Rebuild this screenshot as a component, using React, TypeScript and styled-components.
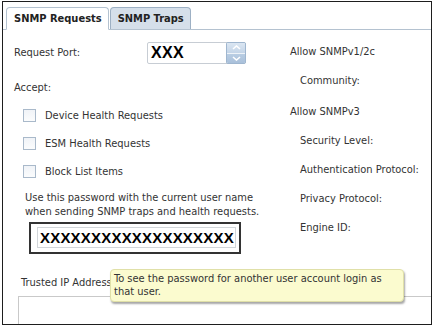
import React from "react";
import styled, { createGlobalStyle } from "styled-components";

const GlobalStyle = createGlobalStyle`
  html, body { margin: 0; padding: 0; background: #fff; }
  body {
    font-family: "DejaVu Sans Condensed", "DejaVu Sans", sans-serif;
    font-size: 11px;
    color: #333;
  }
`;

const Frame = styled.div`
  position: relative;
  margin: 1px 0 0 2px;
  width: 430px;
  height: 324px;
  box-sizing: border-box;
  border: 1px solid #1e1e1e;
  overflow: hidden;
  display: flex;
  flex-direction: column;
`;

const TabBar = styled.div`
  display: flex;
  align-items: flex-end;
  padding: 5px 0 0 3px;
  border-bottom: 1px solid #b4c2d0;
`;

const Tab = styled.div<{ $active?: boolean }>`
  box-sizing: border-box;
  height: ${(p) => (p.$active ? 23 : 22)}px;
  margin-bottom: ${(p) => (p.$active ? -1 : 0)}px;
  padding: 0 6px 0 7px;
  display: flex;
  align-items: center;
  font-weight: bold;
  font-size: 11px;
  color: #222;
  border: 1px solid ${(p) => (p.$active ? "#b4c2d0" : "#9db0c4")};
  border-bottom: ${(p) => (p.$active ? "1px solid #fff" : "none")};
  border-radius: 4px 4px 0 0;
  background: ${(p) => (p.$active ? "#fff" : "#d5dfea")};
  margin-left: ${(p) => (p.$active ? 0 : 1)}px;
`;

const Content = styled.div`
  display: grid;
  grid-template-columns: 273px 1fr;
  padding: 12px 0 0 11px;
`;

const LeftCol = styled.div`
  display: flex;
  flex-direction: column;
`;

const PortRow = styled.div`
  display: flex;
  align-items: center;
  height: 22px;
`;

const Label = styled.div<{ $width?: number }>`
  width: ${(p) => (p.$width ? `${p.$width}px` : "auto")};
  line-height: 16px;
  white-space: nowrap;
`;

const NumberBox = styled.div`
  display: flex;
  width: 99px;
  height: 22px;
  box-sizing: border-box;
  border: 1px solid #c7cdd4;
  border-radius: 2px;
`;

const NumberValue = styled.div`
  flex: 1;
  padding-left: 3px;
  display: flex;
  align-items: center;
  font-family: "Liberation Sans", Arial, sans-serif;
  font-weight: bold;
  font-size: 16px;
  color: #000;
  letter-spacing: 0.3px;
`;

const Spinner = styled.div`
  width: 18px;
  display: flex;
  flex-direction: column;
  border: 1px solid #9fb6cf;
  margin: -1px -1px -1px 0;
  border-radius: 2px;
  overflow: hidden;
`;

const SpinHalf = styled.div<{ $down?: boolean }>`
  flex: 1;
  display: flex;
  align-items: center;
  justify-content: center;
  background: ${(p) =>
    p.$down
      ? "linear-gradient(#b9cde3, #a9c0da)"
      : "linear-gradient(#dbe6f2, #c4d5e8)"};
  border-top: ${(p) => (p.$down ? "1px solid #eef3f8" : "none")};
`;

const SectionLabel = styled.div`
  margin-top: 16px;
  line-height: 16px;
`;

const CheckList = styled.div`
  margin-top: 5px;
  display: flex;
  flex-direction: column;
`;

const CheckRow = styled.label`
  display: flex;
  align-items: center;
  height: 28px;
  padding-left: 9px;
  gap: 9px;
`;

const Box = styled.span`
  width: 13px;
  height: 13px;
  box-sizing: border-box;
  border: 1px solid #a9b9ca;
  background: linear-gradient(#f0f3f7, #fbfcfd);
`;

const Note = styled.div`
  margin-top: 6px;
  padding-left: 11px;
  line-height: 14px;
  white-space: nowrap;
`;

const PasswordFrame = styled.div`
  margin: 3px 0 0 15px;
  width: 212px;
  height: 32px;
  box-sizing: border-box;
  border: 2px solid #333;
  padding: 3px 3px 4px 6px;
  display: flex;
`;

const PasswordInput = styled.div`
  flex: 1;
  border: 1px solid #d2d6da;
  display: flex;
  align-items: center;
  padding-left: 2px;
  font-family: "Liberation Sans", Arial, sans-serif;
  font-weight: bold;
  font-size: 15px;
  letter-spacing: 0.2px;
  color: #000;
  overflow: hidden;
  white-space: nowrap;
`;

const RightCol = styled.div`
  display: flex;
  flex-direction: column;
  gap: 9px;
  padding-left: 3px;
`;

const RightItem = styled.div<{ $indent?: boolean; $group?: boolean }>`
  line-height: 20px;
  padding-left: ${(p) => (p.$indent ? 10 : 0)}px;
  margin-top: ${(p) => (p.$group ? 2 : 0)}px;
  white-space: nowrap;
`;

const Bottom = styled.div`
  display: flex;
  flex-direction: column;
  margin-top: 21px;
  flex: 1;
`;

const TrustedLabel = styled.div`
  padding-left: 18px;
  line-height: 16px;
`;

const TrustedArea = styled.div`
  margin: 5px -4px 0 15px;
  flex: 1;
  min-height: 40px;
  border: 1px solid #c9c9c9;
`;

const Tooltip = styled.div`
  position: absolute;
  left: 107px;
  top: 267px;
  width: 294px;
  box-sizing: border-box;
  padding: 2px 8px 3px 3px;
  background: #fbfbcf;
  border: 1px solid #e0e0a8;
  border-radius: 4px;
  box-shadow: 1px 2px 2px rgba(0, 0, 0, 0.35);
  line-height: 13px;
  color: #333;
`;

const Chevron = ({ down }: { down?: boolean }) => (
  <svg width="9" height="5" viewBox="0 0 9 5">
    <path
      d={down ? "M1 1 L4.5 4 L8 1" : "M1 4 L4.5 1 L8 4"}
      fill="none"
      stroke="#fff"
      strokeWidth="1.6"
    />
  </svg>
);

const rightItems: { text: string; indent?: boolean; group?: boolean }[] = [
  { text: "Allow SNMPv1/2c" },
  { text: "Community:", indent: true },
  { text: "Allow SNMPv3", group: true },
  { text: "Security Level:", indent: true },
  { text: "Authentication Protocol:", indent: true },
  { text: "Privacy Protocol:", indent: true },
  { text: "Engine ID:", indent: true },
];

export default function App() {
  return (
    <>
      <GlobalStyle />
      <Frame>
        <TabBar>
          <Tab $active>SNMP Requests</Tab>
          <Tab>SNMP Traps</Tab>
        </TabBar>
        <Content>
          <LeftCol>
            <PortRow>
              <Label $width={133}>Request Port:</Label>
              <NumberBox>
                <NumberValue>XXX</NumberValue>
                <Spinner>
                  <SpinHalf>
                    <Chevron />
                  </SpinHalf>
                  <SpinHalf $down>
                    <Chevron down />
                  </SpinHalf>
                </Spinner>
              </NumberBox>
            </PortRow>
            <SectionLabel>Accept:</SectionLabel>
            <CheckList>
              {["Device Health Requests", "ESM Health Requests", "Block List Items"].map((t) => (
                <CheckRow key={t}>
                  <Box />
                  <span>{t}</span>
                </CheckRow>
              ))}
            </CheckList>
            <Note>
              Use this password with the current user name
              <br />
              when sending SNMP traps and health requests.
            </Note>
            <PasswordFrame>
              <PasswordInput>XXXXXXXXXXXXXXXXXXX</PasswordInput>
            </PasswordFrame>
          </LeftCol>
          <RightCol>
            {rightItems.map((it) => (
              <RightItem key={it.text} $indent={it.indent} $group={it.group}>
                {it.text}
              </RightItem>
            ))}
          </RightCol>
        </Content>
        <Bottom>
          <TrustedLabel>Trusted IP Addresses:</TrustedLabel>
          <TrustedArea />
        </Bottom>
        <Tooltip>
          To see the password for another user account login as that user.
        </Tooltip>
      </Frame>
    </>
  );
}
